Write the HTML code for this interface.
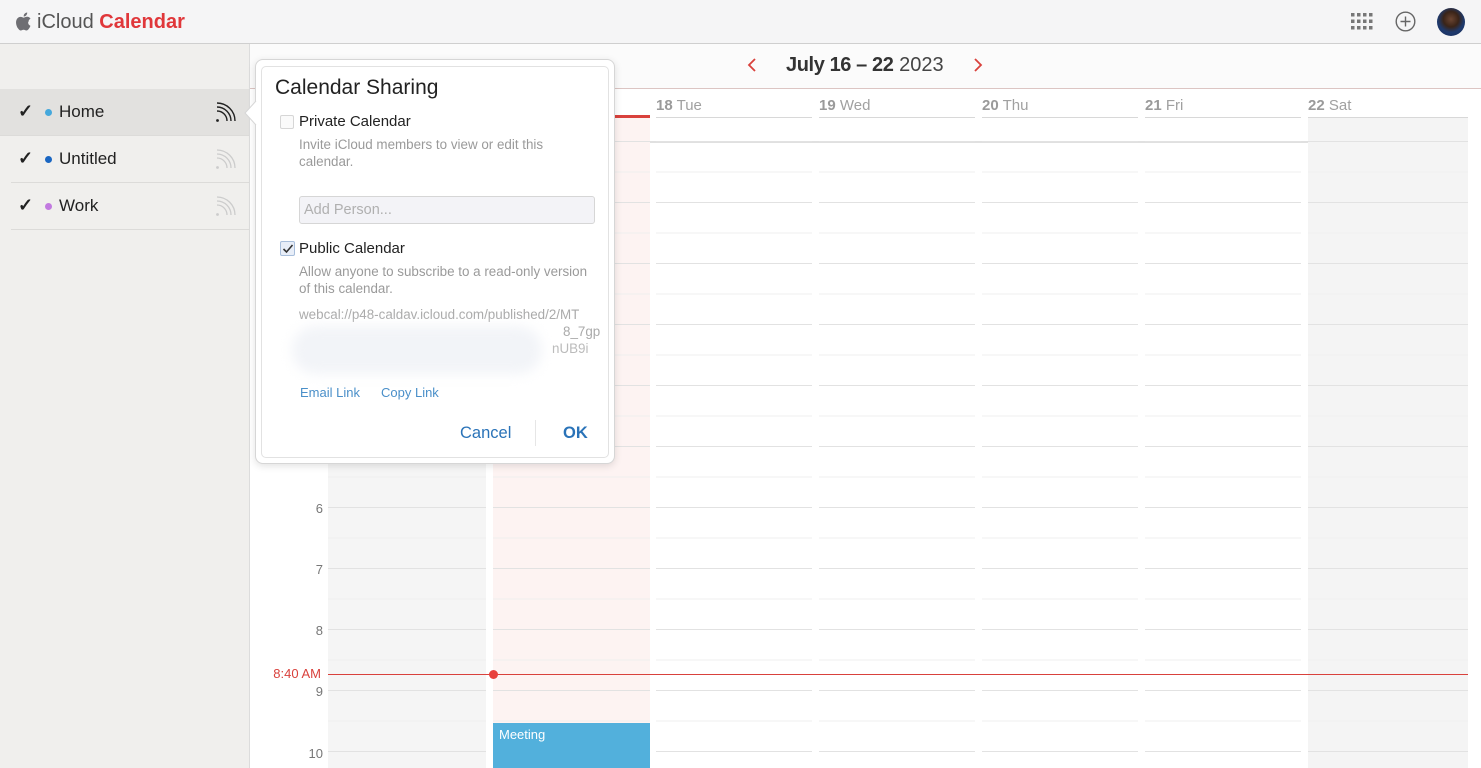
<!DOCTYPE html>
<html><head><meta charset="utf-8"><style>
*{margin:0;padding:0;box-sizing:border-box}
body{width:1481px;height:768px;overflow:hidden;background:#fff;font-family:"Liberation Sans",sans-serif;position:relative}
.abs{position:absolute}
#top{left:0;top:0;width:1481px;height:44px;background:#f5f5f6;border-bottom:1px solid #cfcfcf}
#side{left:0;top:44px;width:250px;height:724px;background:#f0efed;border-right:1px solid #dcdcdc}
.item{position:absolute;left:0;width:249px;height:47px;font-size:17px;color:#222}
.item .ck{position:absolute;left:18px;top:12px;font-size:18px;font-weight:bold}
.item .dot{position:absolute;left:45px;top:20px;width:7px;height:7px;border-radius:50%}
.item .nm{position:absolute;left:59px;top:13px}
.item .sep{position:absolute;left:11px;right:0;bottom:0;height:1px;background:#dcdbd9}
.col{position:absolute;top:141px;height:627px;background-image:repeating-linear-gradient(to bottom,#e2e2e2 0,#e2e2e2 1px,transparent 1px,transparent 30.5px,#efefef 30.5px,#efefef 31.5px,transparent 31.5px,transparent 61px)}
.dh{position:absolute;top:97px;font-size:15px;color:#a0a0a0;border-bottom:1px solid #d8d8d8;height:21px}
.dh b{font-weight:bold;color:#9a9a9a}
.hr{position:absolute;left:270px;width:53px;text-align:right;font-size:13px;color:#777}
.sm{font-size:13.4px;line-height:17px}
</style></head><body>
<div id="top" class="abs">
 <svg class="abs" style="left:15px;top:12px" width="17" height="19" viewBox="0 0 17 19"><path d="M13.5 10c0-2.3 1.9-3.3 2-3.4-1.1-1.6-2.8-1.8-3.4-1.8-1.4-.1-2.8.9-3.5.9s-1.8-.9-3-.8C4 4.9 2.6 5.8 1.8 7.2c-1.6 2.8-.4 6.9 1.1 9.1.8 1.1 1.7 2.3 2.8 2.2 1.1 0 1.6-.7 2.9-.7s1.7.7 2.9.7c1.2 0 2-1.1 2.7-2.2.9-1.2 1.2-2.4 1.2-2.5 0 0-2.3-.9-2.3-3.6zM11.3 3.3c.6-.8 1-1.8.9-2.8-.9 0-2 .6-2.6 1.3-.6.6-1.1 1.7-.9 2.7 1 .1 2-.5 2.6-1.2z" fill="#6e6e73"/></svg>
 <div class="abs" style="left:37px;top:11px;font-size:20px;color:#555"><span>iCloud</span> <span style="color:#e0373a;font-weight:bold">Calendar</span></div>
 <svg class="abs" style="left:1351px;top:13px" width="22" height="18"><g fill="#777"><rect x="0" y="0" width="3.5" height="3.5"/><rect x="6" y="0" width="3.5" height="3.5"/><rect x="12" y="0" width="3.5" height="3.5"/><rect x="18" y="0" width="3.5" height="3.5"/><rect x="0" y="6.5" width="3.5" height="3.5"/><rect x="6" y="6.5" width="3.5" height="3.5"/><rect x="12" y="6.5" width="3.5" height="3.5"/><rect x="18" y="6.5" width="3.5" height="3.5"/><rect x="0" y="13" width="3.5" height="3.5"/><rect x="6" y="13" width="3.5" height="3.5"/><rect x="12" y="13" width="3.5" height="3.5"/><rect x="18" y="13" width="3.5" height="3.5"/></g></svg>
 <svg class="abs" style="left:1395px;top:11px" width="21" height="21"><circle cx="10.5" cy="10.5" r="9.3" fill="none" stroke="#666" stroke-width="1.4"/><path d="M10.5 5.5v10M5.5 10.5h10" stroke="#666" stroke-width="1.4"/></svg>
 <div class="abs" style="left:1437px;top:8px;width:28px;height:28px;border-radius:50%;background:radial-gradient(circle at 50% 40%,#6b4532 0,#3a2418 35%,#1e3a6e 60%,#1a2a55 100%)"></div>
</div>
<div id="side" class="abs">
 <div class="item" style="top:45px;background:#e2e1df"><span class="ck">✓</span><span class="dot" style="background:#45a8dc"></span><span class="nm">Home</span>
  <svg class="abs" style="left:214px;top:13px" width="22" height="22"><g fill="none" stroke="#222" stroke-width="1.4"><path d="M3 9a10 10 0 0 1 10 10M3 5a14 14 0 0 1 14 14M3 1a18 18 0 0 1 18 18"/></g><circle cx="3.5" cy="18.5" r="1.4" fill="#222"/></svg>
  <div class="sep" style="left:0"></div></div>
 <div class="item" style="top:92px"><span class="ck">✓</span><span class="dot" style="background:#1a66c2"></span><span class="nm">Untitled</span>
  <svg class="abs" style="left:214px;top:13px" width="22" height="22"><g fill="none" stroke="#ccc" stroke-width="1.3"><path d="M3 9a10 10 0 0 1 10 10M3 5a14 14 0 0 1 14 14M3 1a18 18 0 0 1 18 18"/></g><circle cx="3.5" cy="18.5" r="1.4" fill="#ccc"/></svg>
  <div class="sep"></div></div>
 <div class="item" style="top:139px"><span class="ck">✓</span><span class="dot" style="background:#c27ae0"></span><span class="nm">Work</span>
  <svg class="abs" style="left:214px;top:13px" width="22" height="22"><g fill="none" stroke="#ccc" stroke-width="1.3"><path d="M3 9a10 10 0 0 1 10 10M3 5a14 14 0 0 1 14 14M3 1a18 18 0 0 1 18 18"/></g><circle cx="3.5" cy="18.5" r="1.4" fill="#ccc"/></svg>
  <div class="sep"></div></div>
</div>
<div class="abs" style="left:250px;top:44px;width:1231px;height:45px;background:#fbfbfb;border-bottom:1px solid #dcc5c3"></div>
<svg class="abs" style="left:746px;top:57px" width="12" height="16"><path d="M9 2L3 8l6 6" fill="none" stroke="#d9413c" stroke-width="1.8"/></svg>
<div class="abs" style="left:786px;top:54px;font-size:20px;color:#333"><span style="font-weight:bold;letter-spacing:-0.4px">July 16 – 22</span> <span style="color:#444">2023</span></div>
<svg class="abs" style="left:972px;top:57px" width="12" height="16"><path d="M3 2l6 6-6 6" fill="none" stroke="#d9413c" stroke-width="1.8"/></svg>
<div class="abs" style="left:328px;top:141px;width:1140px;height:2px;background:#e0e0e0"></div>
<div class="abs" style="left:493px;top:115px;width:157px;height:3px;background:#d9413c"></div>
<div class="dh" style="left:656px;width:156px"><b>18</b> Tue</div>
<div class="dh" style="left:819px;width:156px"><b>19</b> Wed</div>
<div class="dh" style="left:982px;width:156px"><b>20</b> Thu</div>
<div class="dh" style="left:1145px;width:156px"><b>21</b> Fri</div>
<div class="dh" style="left:1308px;width:160px"><b>22</b> Sat</div>
<div class="abs" style="left:1308px;top:118px;width:160px;height:23px;background:#f4f4f4"></div>
<div class="abs" style="left:493px;top:118px;width:157px;height:23px;background:#fdf3f2"></div>
<div class="col" style="left:328px;width:158px;background-color:#f5f5f5"></div>
<div class="col" style="left:493px;width:157px;background-color:#fdf3f2"></div>
<div class="col" style="left:656px;width:156px"></div>
<div class="col" style="left:819px;width:156px"></div>
<div class="col" style="left:982px;width:156px"></div>
<div class="col" style="left:1145px;width:156px"></div>
<div class="col" style="left:1308px;width:160px;background-color:#f4f4f4"></div>
<div class="hr" style="top:501px">6</div>
<div class="hr" style="top:562px">7</div>
<div class="hr" style="top:623px">8</div>
<div class="hr" style="top:684px">9</div>
<div class="hr" style="top:746px">10</div>
<div class="abs" style="left:258px;top:666px;width:63px;text-align:right;font-size:13px;color:#d9413c">8:40 AM</div>
<div class="abs" style="left:328px;top:674px;width:1140px;height:1px;background:#d9413c"></div>
<div class="abs" style="left:489px;top:670px;width:9px;height:9px;border-radius:50%;background:#e8413c"></div>
<div class="abs" style="left:493px;top:723px;width:157px;height:45px;background:#52b0dc;color:#fff;font-size:13px;padding:4px 6px">Meeting</div>
<div class="abs" style="left:255px;top:59px;width:360px;height:405px;background:#fff;border:1px solid #d6d6d6;border-radius:8px;box-shadow:0 2px 8px rgba(0,0,0,0.12)"></div>
<svg class="abs" style="left:243px;top:100px" width="14" height="26"><path d="M13 1L2 13l11 12" fill="#fff" stroke="#d6d6d6"/></svg>
<div class="abs" style="left:261px;top:66px;width:348px;height:392px;border:1px solid #e2e2e2;border-radius:5px;background:#fff"></div>
<div class="abs" style="left:275px;top:76px;font-size:21px;color:#222">Calendar Sharing</div>
<div class="abs" style="left:280px;top:115px;width:14px;height:14px;border:1px solid #d6d6d6;border-radius:2px;background:#fafafa"></div>
<div class="abs" style="left:299px;top:113px;font-size:15px;color:#222">Private Calendar</div>
<div class="abs sm" style="left:299px;top:136px;width:296px;color:#9a9a9a">Invite iCloud members to view or edit this calendar.</div>
<div class="abs" style="left:299px;top:196px;width:296px;height:28px;border:1px solid #d6d6d6;border-radius:3px;background:#f3f3f7;font-size:14.5px;color:#b0b0b0;padding:5px 4px">Add Person...</div>
<div class="abs" style="left:280px;top:241px;width:15px;height:15px;border:1px solid #a8bedb;border-radius:2px;background:#e8eef8"></div>
<svg class="abs" style="left:281px;top:242px" width="14" height="14"><path d="M2.5 7l3 3 6-7" fill="none" stroke="#333" stroke-width="1.6"/></svg>
<div class="abs" style="left:299px;top:240px;font-size:15px;color:#222">Public Calendar</div>
<div class="abs sm" style="left:299px;top:263px;width:300px;color:#9a9a9a">Allow anyone to subscribe to a read-only version of this calendar.</div>
<div class="abs sm" style="left:299px;top:306px;width:310px;color:#aaa;white-space:nowrap">webcal://p48-caldav.icloud.com/published/2/MT</div>
<div class="abs sm" style="left:563px;top:323px;color:#aaa">8_7gp</div>
<div class="abs sm" style="left:552px;top:340px;color:#bbb">nUB9i</div>
<div class="abs" style="left:292px;top:326px;width:250px;height:48px;border-radius:24px;background:#f2f4f8;filter:blur(6px)"></div>
<div class="abs" style="left:300px;top:385px;font-size:13px;color:#4a8fc9">Email Link</div>
<div class="abs" style="left:381px;top:385px;font-size:13px;color:#4a8fc9">Copy Link</div>
<div class="abs" style="left:460px;top:424px;font-size:16.5px;color:#2a73b8">Cancel</div>
<div class="abs" style="left:535px;top:420px;width:1px;height:26px;background:#e6e6e6"></div>
<div class="abs" style="left:563px;top:424px;font-size:16.5px;color:#2a73b8;font-weight:bold">OK</div>
</body></html>
